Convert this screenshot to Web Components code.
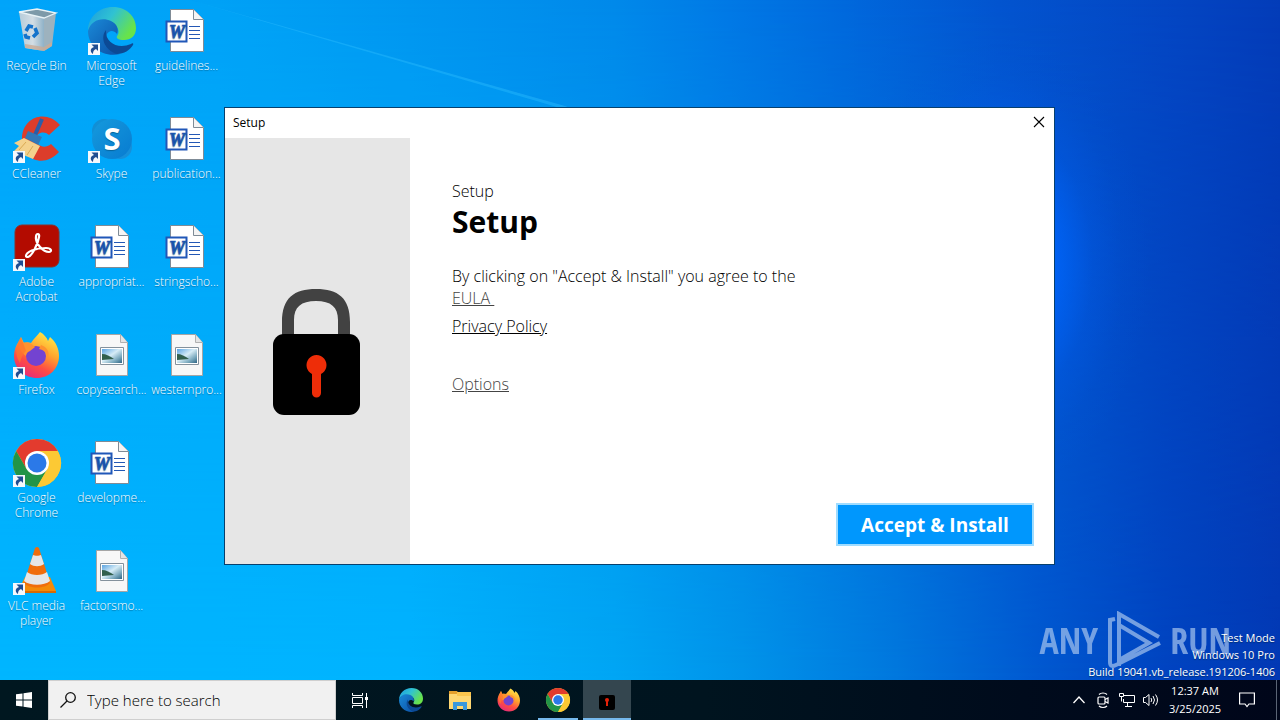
<!DOCTYPE html>
<html lang="en">
<head>
<meta charset="utf-8">
<title>Desktop</title>
<style>
  html, body { margin: 0; height: 100%; }
  body { font: 12px/15px "Open Sans", "Noto Sans", sans-serif; background: #00b4ff; }
</style>
</head>
<body>
<desktop-screen>
  <shortcut-grid slot="icons">
    <desktop-shortcut icon="bin">Recycle Bin</desktop-shortcut>
    <desktop-shortcut icon="ccleaner" linked>CCleaner</desktop-shortcut>
    <desktop-shortcut icon="acrobat" linked>Adobe Acrobat</desktop-shortcut>
    <desktop-shortcut icon="firefox" linked>Firefox</desktop-shortcut>
    <desktop-shortcut icon="chrome" linked>Google Chrome</desktop-shortcut>
    <desktop-shortcut icon="vlc" linked>VLC media player</desktop-shortcut>
    <desktop-shortcut icon="edge" linked>Microsoft Edge</desktop-shortcut>
    <desktop-shortcut icon="skype" linked>Skype</desktop-shortcut>
    <desktop-shortcut icon="word">appropriat...</desktop-shortcut>
    <desktop-shortcut icon="picture">copysearch...</desktop-shortcut>
    <desktop-shortcut icon="word">developme...</desktop-shortcut>
    <desktop-shortcut icon="picture">factorsmo...</desktop-shortcut>
    <desktop-shortcut icon="word">guidelines...</desktop-shortcut>
    <desktop-shortcut icon="word">publication...</desktop-shortcut>
    <desktop-shortcut icon="word">stringscho...</desktop-shortcut>
    <desktop-shortcut icon="picture">westernpro...</desktop-shortcut>
  </shortcut-grid>
  <brand-watermark slot="overlay"></brand-watermark>
  <build-info slot="overlay">
    <div>Test Mode</div><div>Windows 10 Pro</div><div>Build 19041.vb_release.191206-1406</div>
  </build-info>
  <setup-window slot="window"></setup-window>
  <task-bar slot="taskbar"></task-bar>
</desktop-screen>

<script>
const ICONS = {
  bin: `<svg viewBox="0 0 48 48"><defs><linearGradient id="a" x2="1"><stop stop-color="#b5ccda"/><stop offset=".55" stop-color="#d3dde4"/><stop offset="1" stop-color="#8fb2c8"/></linearGradient></defs>
    <path d="M6 5 31 11 31 44 12 41z" fill="url(#a)"/><path d="M31 11 43 6 39 39 31 44z" fill="#9db2be"/><path d="M6 5 24 2 43 6 31 11z" fill="#7d9aa9" stroke="#e8f2f6" stroke-width="1.3"/>
    <path d="M12 37 31 40 31 44 12 41zM31 40 39 35 39 39 31 44z" fill="#c9ab96" opacity=".8"/>
    <g fill="none" stroke="#1473cb" stroke-width="3.600"><path d="m13 24 3-5 4 1M22 21l2 5-4 4M17 31l-4-1-1-3"/></g></svg>`,
  edge: `<svg viewBox="0 0 48 48"><defs><linearGradient id="a" x2="1" y2=".5"><stop stop-color="#1b9be0"/><stop offset=".5" stop-color="#30c2d2"/><stop offset="1" stop-color="#68e34a"/></linearGradient><linearGradient id="b" y2="1"><stop stop-color="#1a8ad8"/><stop offset="1" stop-color="#0b4fa5"/></linearGradient></defs>
    <path d="M0 24C0 10 11 0 25 0c14 0 23 10 23 21 0 8-5 12-12 12-6 0-8-2-7-4 3-3 2-10-5-12C14 12 3 14 0 24z" fill="url(#a)"/>
    <path d="M0 24C3 13 14 10 23 14c6 3 8 8 6 13-5-6-12-2-11 6 1 8 7 13 14 14C15 51 0 40 0 24z" fill="url(#b)"/>
    <path d="M18 23c-6 7-2 20 11 24 7 0 13-4 16-9 1-2-1-2-2-1-12 5-26 0-25-14z" fill="#0c4a95"/></svg>`,
  word: `<svg viewBox="0 0 48 48"><path d="M7.500 2.500h23l10 10v32h-33z" fill="#fff" stroke="#7f8b96"/><path d="M30.500 2.500v10h10" fill="#f4f4f4" stroke="#7f8b96"/>
    <path d="M26 19.500h11M26 23.500h11M26 27.500h11M26 31.500h11" stroke="#2458b5"/><path d="M3.500 14.500h20v20h-20z" fill="#fff" stroke="#2057b8" stroke-width="2"/>
    <text x="14" y="31" text-anchor="middle" font-family="Liberation Serif, serif" font-size="18" font-weight="700" font-style="italic" fill="#1d55b5" stroke="#1d55b5" stroke-width=".6">W</text></svg>`,
  picture: `<svg viewBox="0 0 48 48"><defs><linearGradient id="a" y2="1"><stop stop-color="#5ba4e2"/><stop offset=".45" stop-color="#d6ecf6"/><stop offset=".75" stop-color="#79a8bd"/><stop offset="1" stop-color="#2e6484"/></linearGradient></defs>
    <path d="M8.500 3.500h24l7 8v33h-31z" fill="#f7f7f7" stroke="#a5a5a5"/><path d="M32.500 3.500v8h7" fill="#e4e4e4" stroke="#b0b0b0"/><path d="M12.500 16.500h23v17h-23z" fill="#fff" stroke="#84919c"/><path d="M14 18h20v14H14z" fill="url(#a)"/><path d="M14 23c4 0 8 2 12 5l-12 1z" fill="#315f4c"/></svg>`,
  acrobat: `<svg viewBox="0 0 48 48"><rect x="2" y="2" width="44" height="42" rx="7" fill="#b30b00" stroke="#8b302a"/><path d="M13 33c0-4 9-8 20-8 6 0 6 4 3 4-6 0-14-9-13-15 0-4 4-4 3 0-1 7-7 19-11 20-1 0-2 0-2-1z" fill="none" stroke="#fff" stroke-width="2.200"/></svg>`,
  firefox: `<svg viewBox="0 0 48 48"><defs><linearGradient id="a" x1=".8" x2=".3" y2="1"><stop stop-color="#fff04c"/><stop offset=".4" stop-color="#ffa52d"/><stop offset=".7" stop-color="#ff4d43"/><stop offset="1" stop-color="#e52a7b"/></linearGradient></defs>
    <path d="M27 1c4 2 7 6 8 9l2-4c6 5 9 12 9 19 0 13-10 22-22 22S1 38 1 25c0-6 2-11 5-15l2-4 3 6c2-1 5-1 7 0 3-5 6-7 9-11z" fill="url(#a)"/><circle cx="23" cy="25" r="10" fill="#7343d1"/><path d="M28 14c6 2 9 7 7 13-2-6-4-8-9-9zM6 13c7-3 13-1 16 3l-5 4c-3 1-4 3-4 5-4-3-7-7-7-12z" fill="#ff922f"/><path d="M8 6c-5 7-7 18-1 26 2-9 6-12 6-12z" fill="#ff762d" opacity=".75"/></svg>`,
  chrome: `<svg viewBox="0 0 48 48"><circle cx="24" cy="24" r="24" fill="#fcc934"/><path d="M3.200 12A24 24 0 0 1 44.800 12H24L13.600 30z" fill="#e33b2e"/><path d="M3.200 12A24 24 0 0 0 24 48l10.400-18H13.600z" fill="#229447"/><path d="M24 12h20.800A24 24 0 0 1 24 48l10.400-18z" fill="#fcc934"/><circle cx="24" cy="24" r="12" fill="#fff"/><circle cx="24" cy="24" r="9.500" fill="#2b79e8"/></svg>`,
  vlc: `<svg viewBox="0 0 48 48"><path d="M12 30h25l6 14-1 2H6l-1-2z" fill="#f48a08"/><path d="M5 44h38v2H5z" fill="#d76a02"/><path d="M22 1q2-2 4 0l11 35c-5 6-21 6-26 0z" fill="#f06d0b"/><path d="m20 8-3 9c4 3 10 3 14 0l-3-9c-2 1-6 1-8 0zM14 25l-3 9c6 5 20 5 26 0l-3-9c-5 4-15 4-20 0z" fill="#e6e6e6"/></svg>`,
  ccleaner: `<svg viewBox="0 0 48 48"><path d="m47 10-11 10c-5-5-13-2-13 4s8 11 15 5l8 8C32 53 9 46 9 24S33-6 47 10z" fill="#dc3d2b"/><path d="M29 4 22 20" stroke="#2b5ea8" stroke-width="4"/><path d="m15 16 14 6-4 8-13-7z" fill="#3178b8"/><path d="m11 23 16 8-7 13L1 36l5-5-5-3z" fill="#f4d18c"/><path d="m13 27-7 8M20 31l-6 9" stroke="#d9a953"/></svg>`,
  skype: `<svg viewBox="0 0 48 48"><defs><linearGradient id="a" y2="1"><stop stop-color="#159add"/><stop offset="1" stop-color="#087bd0"/></linearGradient></defs><circle cx="16" cy="16" r="12" fill="#118fd5"/><circle cx="32" cy="32" r="12" fill="#168fd9"/><circle cx="24" cy="24" r="20" fill="url(#a)"/><text x="24" y="35" text-anchor="middle" font-family="Open Sans, sans-serif" font-size="31" font-weight="700" fill="#fff">S</text></svg>`,
  shortcut: `<svg viewBox="0 0 12 12"><path d="M0 0h12v12H0z" fill="#f5f8fc"/><path d="M3.500 1.500H10V8L8 6C6 7 5 8 5 11 1 8 3 5 6 4z" fill="#204d91"/></svg>`,
  lock: `<svg viewBox="1 -1 88 128"><path d="M9 50V34C9 10 21 1 43 1s34 9 34 33v16H65V32c0-13-7-19-22-19S21 19 21 32v18z" fill="#424242"/><rect y="46" width="87" height="81" rx="11" fill="#000"/><path d="M39 86a10 10 0 1 1 9 0v19a4 4 0 0 1-9 0z" fill="#ee2d08"/></svg>`,
  close: `<svg viewBox="0 0 12 12"><path d="m1 1 10 10M11 1 1 11" stroke="#000" stroke-width="1.100"/></svg>`,
  start: `<svg viewBox="0 0 16 16" fill="#fff"><path d="M0 2.300 6.500 1.400V7.500H0zM7.500 1.200 16 0v7.500H7.500zM0 8.500h6.500v6.100L0 13.700zM7.500 8.500H16V16l-8.500-1.200z"/></svg>`,
  search: `<svg viewBox="0 0 16 16" fill="none" stroke="#111" stroke-width="1.300"><circle cx="10.500" cy="5.500" r="4.800"/><path d="M7 9 .500 15.500"/></svg>`,
  taskview: `<svg viewBox="0 0 16 16" fill="none" stroke="#fff"><path d="M.500 1v2.500h10V1M.500 16v-2.500h10V16M.500 5.500h10v6h-10zM14.500 1v15"/><path d="M13 5h3v3h-3z" fill="#fff" stroke="none"/></svg>`,
  explorer: `<svg viewBox="0 0 24 24"><path d="M1 3h8l2 3h-10z" fill="#e5a02c"/><path d="M1 6h22v15H1z" fill="#ffd772"/><path d="M9 4h14v4H9z" fill="#fbc54d"/><path d="M5 22v-8h14v8h-4v-4H9v4z" fill="#3a97dc"/></svg>`,
  setup: `<svg viewBox="0 0 16 16"><rect width="16" height="15" rx="2" fill="#000"/><circle cx="8" cy="5" r="2" fill="#e52108"/><path d="M7 5h2v6H7z" fill="#e52108"/></svg>`,
  up: `<svg viewBox="0 0 16 16" fill="none" stroke="#fff" stroke-width="1.300"><path d="m2.500 11 5.500-6 5.500 6"/></svg>`,
  meet: `<svg viewBox="0 0 16 16" fill="none" stroke="#fff" stroke-width="1.200"><rect x="3" y="5" width="7" height="7" rx="1"/><path d="M10 7.500 13 6v5l-3-1.500M4 2.500c2-2 6-2 8 0M4 14c2 2 6 2 8 0"/></svg>`,
  network: `<svg viewBox="0 0 16 16" fill="none" stroke="#fff"><path d="M5 3.500h10.500v7H4.500V7M8.500 10.500v4M6 14.500h7M.500 1.500h4v3h-4zM2.500 4.500v5"/></svg>`,
  volume: `<svg viewBox="0 0 16 16" fill="none" stroke="#fff"><path d="M.500 5.500h2L6 2.500v11l-3.500-3h-2zM8 6q1.500 2 0 4M10 4q3 4 0 8M12.500 2.500q4 5.500 0 11"/></svg>`,
  action: `<svg viewBox="0 0 16 16" fill="none" stroke="#fff" stroke-width="1.200"><path d="M.600 1h14.800v11H10l-2 2.500L6 12H.600z"/></svg>`
};

const define = (name, html, setup) => {
  const template = document.createElement('template');
  template.innerHTML = html;
  customElements.define(name, class extends HTMLElement {
    constructor() {
      super();
      this.attachShadow({ mode: 'open' }).append(template.content.cloneNode(true));
    }
    connectedCallback() { if (setup) setup(this, this.shadowRoot); }
  });
};

define('ui-icon', `<style>:host{display:block;flex:none;width:var(--size,16px);height:var(--size,16px)} svg{display:block;width:100%;height:100%;overflow:visible}</style><span></span>`,
  (host, root) => { root.querySelector('span').innerHTML = ICONS[host.getAttribute('name')] || ''; });

define('desktop-screen', `
<style>
  :host{display:grid;grid-template-rows:1fr auto;min-height:100vh;color:#fff}
  main{position:relative;min-height:648px;overflow:hidden;
    background:linear-gradient(90deg,#00b6ff 0%,#00b4ff 32%,#00a6f4 48%,#0094ea 58%,#0078de 70%,#0059d1 81%,#0044c1 91%,#0339b5 100%)}
  main::before{content:"";position:absolute;inset:0;
    background:linear-gradient(90deg,#00a3f9 0%,#00a1f6 17%,#0096f0 32%,#0089ea 48%,#0078e5 57%,#0068dc 66%,#0254cf 78%,#0345c2 92%,#033cb8 100%);
    -webkit-mask-image:linear-gradient(#000,transparent);mask-image:linear-gradient(#000,transparent)}
  main::after{content:"";position:absolute;inset:0;
    background:radial-gradient(ellipse 150px 230px at 1000px 265px,#0068ff 25%,#0065fcaa 42%,#0060f444 62%,#005ce814 82%,transparent)}
  .ray{position:absolute;left:0;top:0;width:600px;height:120px}
  .icons{position:relative;z-index:1}
</style>
<main>
  <svg class="ray" viewBox="0 0 600 120"><path d="M190 0 565 106 600 120 540 102z" fill="#35c0ff" opacity=".4"/><path d="M190 0 610 120H0V0z" fill="#00b0ff" opacity=".15"/></svg>
  <div class="icons"><slot name="icons"></slot></div>
  <slot name="overlay"></slot><slot name="window"></slot>
</main>
<slot name="taskbar"></slot>`);

define('shortcut-grid', `<style>:host{display:grid;grid-template-rows:repeat(6,108px);grid-auto-columns:75px;grid-auto-flow:column;width:max-content}</style><slot></slot>`);

define('desktop-shortcut', `
<style>
  :host{display:block;color:#fff}
  a{display:grid;justify-items:center;row-gap:3px;padding:7px 2px 0 0;color:inherit;text-decoration:none;text-align:center;text-shadow:0 1px 1px #0468}
  .art{position:relative;--size:48px}
  .badge{position:absolute;left:0;bottom:0;--size:12px}
  :host(:not([linked])) .badge{display:none}
  .label{font-weight:300}
</style>
<a href="#"><span class="art"><ui-icon></ui-icon><ui-icon class="badge" name="shortcut"></ui-icon></span><span class="label"><slot></slot></span></a>`,
  (host, root) => { const i = root.querySelector('ui-icon'); i.setAttribute('name', host.getAttribute('icon')); i.connectedCallback(); });

define('build-info', `<style>:host{position:absolute;right:5px;bottom:0;z-index:1;text-align:right;font-size:11px;line-height:17px;text-shadow:0 1px 1px #0238}</style><slot></slot>`);

define('brand-watermark', `
<style>
  :host{position:absolute;right:49px;bottom:8px;display:flex;align-items:center;gap:8px;color:#a6c4ee;opacity:.7;font:300 36px/62px "Open Sans Condensed","Liberation Sans Narrow","Liberation Sans",sans-serif}
  svg{width:56px;height:60px}
</style>
<span>ANY</span>
<svg viewBox="0 0 56 60" fill="none" stroke="currentColor" stroke-width="4"><path d="M9 8 4 9v42q0 6 6 3L54 32M13 55V3l40 23M13 14l30 18-30 17"/></svg>
<span>RUN</span>`);

define('setup-window', `
<style>
  :host{position:absolute;left:224px;top:107px;width:829px;display:grid;grid-template-rows:30px 1fr;min-height:456px;border:1px solid #07406e;background:#fff;color:#000;z-index:2}
  header{display:flex;align-items:center;justify-content:space-between;padding:0 9px 2px 8px}
  button{font:inherit;border:0;padding:0;background:none}
  .close{--size:12px}
  .body{display:grid;grid-template-columns:185px 1fr}
  aside{display:grid;place-items:center;background:#e6e6e6}
  .lock{width:88px;height:128px}
  section{display:flex;flex-direction:column;align-items:flex-start;padding:42px 20px 18px 42px;font-size:16px;line-height:22px;font-weight:300}
  p,h1{margin:0}
  h1{font-size:30px;line-height:40px;font-weight:700;margin-bottom:23px}
  p.agree{max-width:360px}
  a{color:#000} a.soft{color:#444;white-space:pre}
  .privacy{margin-top:6px} .options{margin-top:36px}
  .accept{margin-top:auto;align-self:flex-end;width:198px;height:43px;background:#0097fd;color:#fff;border:2px solid #9fdcff;font-size:19px;font-weight:700}
</style>
<header><span>Setup</span><button class="close" aria-label="Close"><ui-icon name="close"></ui-icon></button></header>
<div class="body">
  <aside><ui-icon class="lock" name="lock"></ui-icon></aside>
  <section>
    <p>Setup</p><h1>Setup</h1>
    <p class="agree">By clicking on "Accept &amp; Install" you agree to the <a class="soft" href="#">EULA </a></p>
    <a class="privacy" href="#">Privacy Policy</a>
    <a class="soft options" href="#">Options</a>
    <button class="accept">Accept &amp; Install</button>
  </section>
</div>`);

define('task-button', `
<style>
  :host{display:block;width:48px;--size:24px}
  button{display:grid;place-items:center;width:100%;height:40px;padding:0;border:0;background:none}
  :host([active]) button{background:#34464f;border-bottom:2px solid #76b9ed}
  :host([running]) button{background:linear-gradient(#76b9ed,#76b9ed) center bottom/40px 2px no-repeat}
</style><button><slot></slot></button>`,
  (host, root) => root.querySelector('button').setAttribute('aria-label', host.getAttribute('label')));

define('task-bar', `
<style>
  :host{display:flex;align-items:stretch;height:40px;background:linear-gradient(90deg,#001720,#00141f 55%,#000b1c 80%,#00061a);position:relative;z-index:3}
  .small{--size:16px}
  label{display:flex;align-items:center;gap:11px;flex:0 1 288px;box-sizing:border-box;padding:0 11px;background:#f1f1f1;border:1px solid #cfcfcf}
  input{flex:1;min-width:0;border:0;outline:0;background:none;font:300 15px/20px "Open Sans",sans-serif;padding:0;color:#000}
  input::placeholder{color:#000;opacity:1}
  .apps{display:flex;gap:1px;margin-left:3px}
  .tray{display:flex;align-items:center;margin-left:auto}
  .icons{display:flex;gap:8px;margin-right:10px}
  time{display:block;text-align:center;font-size:11px;line-height:18px;width:52px;white-space:nowrap}
  .action{margin-left:18px}
  .peek{width:3px;height:40px;margin-left:21px;border-left:1px solid #5a6475}
  .setup{--size:16px;padding-top:8px}
</style>
<task-button label="Start"><ui-icon class="small" name="start"></ui-icon></task-button>
<label><ui-icon name="search"></ui-icon><input aria-label="Search" placeholder="Type here to search"></label>
<task-button label="Task View"><ui-icon class="small" name="taskview"></ui-icon></task-button>
<div class="apps">
  <task-button label="Edge"><ui-icon name="edge"></ui-icon></task-button>
  <task-button label="Explorer"><ui-icon name="explorer"></ui-icon></task-button>
  <task-button label="Firefox"><ui-icon name="firefox"></ui-icon></task-button>
  <task-button label="Chrome" running><ui-icon name="chrome"></ui-icon></task-button>
  <task-button label="Setup" active><ui-icon class="setup" name="setup"></ui-icon></task-button>
</div>
<div class="tray">
  <div class="icons"><ui-icon name="up"></ui-icon><ui-icon name="meet"></ui-icon><ui-icon name="network"></ui-icon><ui-icon name="volume"></ui-icon></div>
  <time datetime="2025-03-25T00:37">12:37 AM<br>3/25/2025</time>
  <ui-icon class="action" name="action"></ui-icon><span class="peek"></span>
</div>`);
</script>
</body>
</html>
